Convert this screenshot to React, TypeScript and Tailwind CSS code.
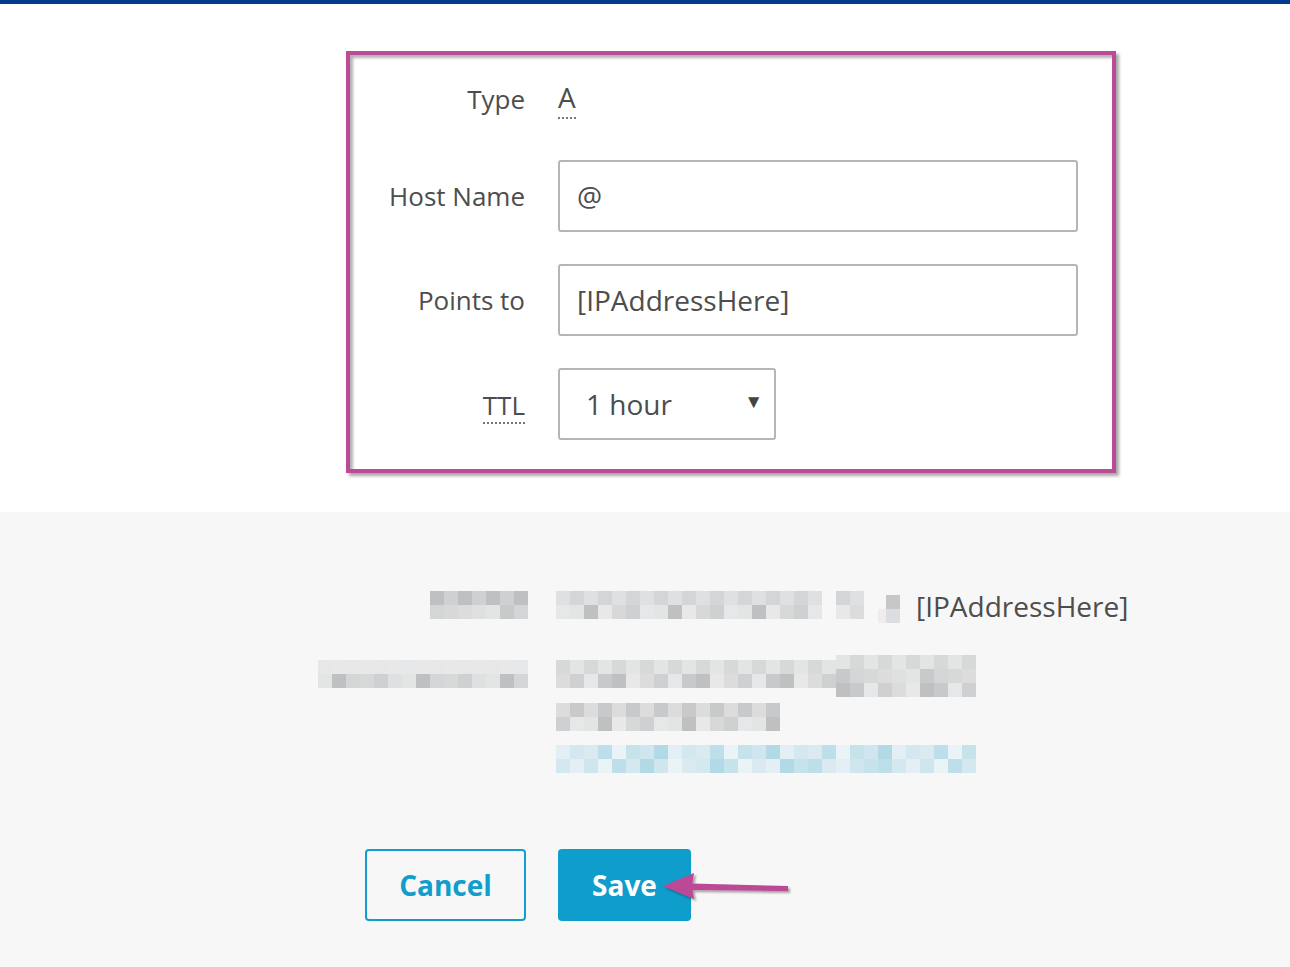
import React from 'react';

const greys = ['#dcdcdc', '#d4d5d7', '#e3e4e4', '#cfd0d2', '#e8e8e8', '#c8c9cb', '#dfe0e2', '#d7d8d8', '#bfc0c2', '#e6e7e9'];
const blues = ['#cfe6ef', '#bcdfea', '#e3eff4', '#c6e3ec', '#dbeaf1', '#b2d9e6', '#eaf3f6', '#d4e8f0'];

// blurred/pixelated content, drawn as 14px cells
const Mosaic: React.FC<{ cols: number; rows?: number; seed: number; tone?: 'grey' | 'blue' }> = ({
  cols,
  rows = 2,
  seed,
  tone = 'grey',
}) => {
  const pal = tone === 'blue' ? blues : greys;
  return (
    <div className="flex flex-col">
      {Array.from({ length: rows }).map((_, r) => (
        <div key={r} className="flex">
          {Array.from({ length: cols }).map((_, c) => {
            const i = (seed * 7 + r * 13 + c * 5 + ((c * r + seed) % 3)) % pal.length;
            return <div key={c} className="w-[14px] h-[14px]" style={{ background: pal[i] }} />;
          })}
        </div>
      ))}
    </div>
  );
};

const Label: React.FC<{ children: React.ReactNode }> = ({ children }) => (
  <div className="w-[175px] flex justify-end items-center text-[26px] text-[#4d4d4d]">{children}</div>
);

const App: React.FC = () => {
  return (
    <div className="min-h-[967px] bg-white flex flex-col" style={{ fontFamily: '"Open Sans", "Liberation Sans", sans-serif' }}>
      <div className="h-[4px] bg-[#003b8e]" />

      {/* Form */}
      <div className="h-[508px] pt-[47px]">
        <div className="ml-[346px] w-[770px] border-4 border-[#bc4b97] shadow-[3px_3px_3px_rgba(0,0,0,0.35),inset_3px_3px_3px_rgba(0,0,0,0.3)] pt-[8px] pb-[29px] pr-[34px] flex flex-col">
          <div className="flex h-[72px] gap-[33px] mb-[1px]">
            <Label>Type</Label>
            <div className="flex items-center">
              <span className="text-[28px] text-[#4d4d4d] leading-none border-b-2 border-dotted border-[#777] pb-[6px] mt-[4px]">A</span>
            </div>
          </div>

          <div className="flex h-[72px] gap-[33px] mt-[24px]">
            <Label>Host Name</Label>
            <div className="w-[520px] h-[72px] border-2 border-[#b4b6b9] rounded-[3px] flex items-center px-[17px] text-[28px] text-[#4d4d4d]">
              @
            </div>
          </div>

          <div className="flex h-[72px] gap-[33px] mt-[32px]">
            <Label>Points to</Label>
            <div className="w-[520px] h-[72px] border-2 border-[#b4b6b9] rounded-[3px] flex items-center px-[17px] text-[28px] text-[#4d4d4d]">
              [IPAddressHere]
            </div>
          </div>

          <div className="flex h-[72px] gap-[33px] mt-[32px]">
            <Label>
              <span className="leading-none border-b-2 border-dotted border-[#777] pb-[4px] mt-[8px]">TTL</span>
            </Label>
            <div className="w-[218px] h-[72px] border-2 border-[#b4b6b9] rounded-[3px] flex items-center justify-between pl-[26px] pr-[11px] text-[28px] text-[#4d4d4d]">
              <span>1 hour</span>
              <span className="text-[19px] text-[#444] -mt-[6px]">▼</span>
            </div>
          </div>
        </div>
      </div>

      {/* Summary */}
      <div className="flex-1 bg-[#f7f7f7] pt-[79px] relative">
        <div className="flex gap-[28px]">
          <div className="w-[528px] flex justify-end">
            <Mosaic cols={7} seed={1} />
          </div>
          <div className="flex items-start gap-[14px]">
            <Mosaic cols={19} seed={2} />
            <Mosaic cols={2} seed={3} />
            <div className="flex flex-col pt-[4px]">
              <div className="ml-[8px] w-[14px] h-[14px] bg-[#c6c7c9]" />
              <div className="flex">
                <div className="w-[8px] h-[14px] bg-[#efedeb]" />
                <div className="w-[14px] h-[14px] bg-[#dcdde0]" />
              </div>
            </div>
            <span className="text-[28px] leading-[38px] text-[#4d4d4d] -mt-[4px] ml-[2px]">[IPAddressHere]</span>
          </div>
        </div>

        <div className="flex gap-[28px] mt-[30px]">
          <div className="w-[528px] flex justify-end">
            <div className="mt-[5px]">
              <Mosaic cols={15} seed={4} />
            </div>
          </div>
          <div className="flex flex-col">
            <div className="flex">
              <div className="mt-[5px]">
                <Mosaic cols={20} seed={5} />
              </div>
              <Mosaic cols={10} rows={3} seed={6} />
            </div>
            <div className="mt-[6px]">
              <Mosaic cols={16} seed={7} />
            </div>
            <div className="mt-[14px]">
              <Mosaic cols={30} seed={8} tone="blue" />
            </div>
          </div>
        </div>

        <div className="flex gap-[32px] ml-[365px] mt-[76px]">
          <button className="w-[161px] h-[72px] border-2 border-[#119ecc] rounded-[4px] text-[28px] font-bold text-[#119ecc] bg-transparent">
            Cancel
          </button>
          <div className="relative">
            <button className="w-[133px] h-[72px] rounded-[4px] bg-[#0f9dcc] text-[28px] font-bold text-white">
              Save
            </button>
            <svg className="absolute left-[100px] top-[22px]" width="140" height="36" viewBox="0 0 140 36">
              <defs>
                <filter id="sh" x="-10%" y="-30%" width="130%" height="160%">
                  <feDropShadow dx="2" dy="2" stdDeviation="1.2" floodColor="#000" floodOpacity="0.35" />
                </filter>
              </defs>
              <g filter="url(#sh)">
                <path d="M34 12.5 L130 15 L130 20 L34 19 Z" fill="#bb4896" />
                <path d="M5 15 L36 2 L34 15.5 L36 28 Z" fill="#bb4896" />
              </g>
            </svg>
          </div>
        </div>
      </div>
    </div>
  );
};

export default App;
